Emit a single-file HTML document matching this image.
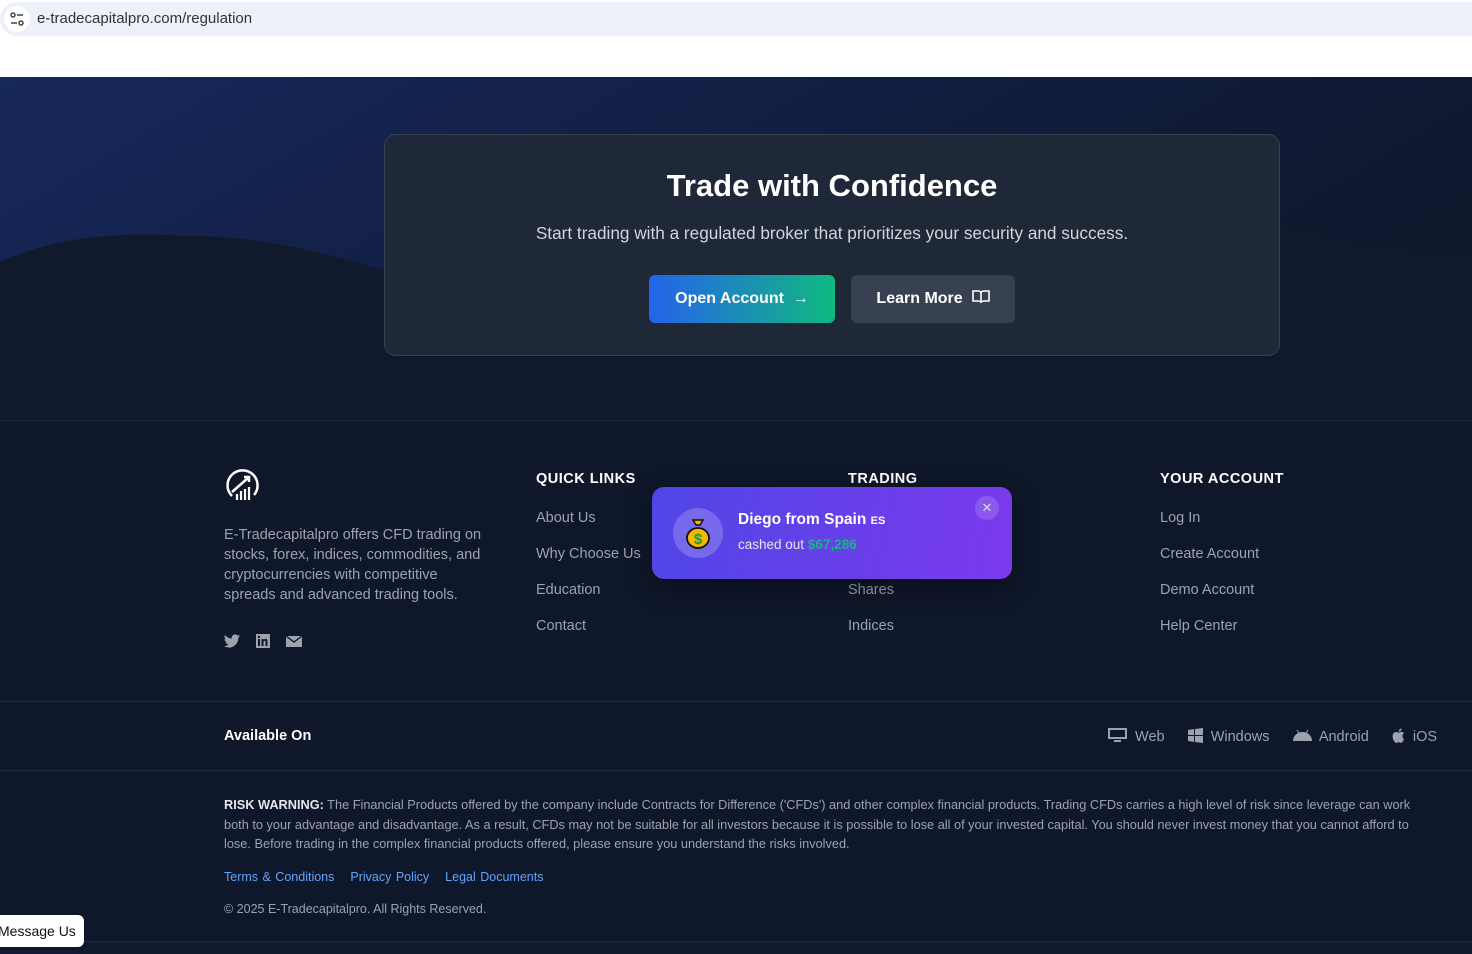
<!DOCTYPE html>
<html><head><meta charset="utf-8"><style>
*{margin:0;padding:0;box-sizing:border-box}
body{width:1472px;height:954px;overflow:hidden;font-family:"Liberation Sans",sans-serif;background:#0f172a;position:relative}
.bar{position:absolute;left:0;top:0;width:1472px;height:77px;background:#fff}
.url{position:absolute;left:0;top:2px;width:1472px;height:34px;background:#edf2fa;border-radius:17px 0 0 17px}
.url span{position:absolute;left:37px;top:8px;font-size:15px;color:#333}
.ic{position:absolute;left:4px;top:4px;width:26px;height:26px;border-radius:13px;background:#fff}
.hero{position:absolute;left:0;top:77px;width:1472px;height:344px;overflow:hidden;border-bottom:1px solid #1e293b}
.card{position:absolute;left:384px;top:134px;width:896px;height:222px;background:rgba(31,41,55,.92);border:1px solid #374151;border-radius:12px;text-align:center}
.card h1{font-size:31px;color:#fff;margin-top:33px;font-weight:bold}
.card p{font-size:17.2px;color:#d1d5db;margin-top:19px}
.btn{position:absolute;top:140px;height:48px;border-radius:6px;color:#fff;font-weight:bold;font-size:16px;line-height:48px}
.b1{left:264px;width:186px;background:linear-gradient(90deg,#2563eb,#10b981)}
.b2{left:466px;width:164px;background:#374151}
.foot{position:absolute;left:0;top:421px;width:1472px;height:533px;background:#0f172a}
.col h4{position:absolute;top:50px;color:#fff;font-size:14.5px;letter-spacing:.5px}
.lnk{position:absolute;color:#9ca3af;font-size:14.5px}
.desc{position:absolute;left:224px;top:104px;width:266px;color:#9ca3af;font-size:14.5px;line-height:20px}
.sep{position:absolute;left:0;width:1472px;height:1px;background:#1e293b}
.pop{position:absolute;left:652px;top:487px;width:360px;height:92px;border-radius:12px;background:linear-gradient(100deg,#4f46e5,#7c3aed);box-shadow:0 8px 24px rgba(0,0,0,.4)}
.risk{position:absolute;left:224px;top:795px;width:1196px;font-size:12.75px;line-height:19.6px;color:#9ca3af}
.msg{position:absolute;left:-2px;top:915px;width:86px;height:32px;background:#fff;border-radius:0 6px 6px 0;font-size:14px;line-height:32px;color:#111;padding-left:0;box-shadow:0 1px 4px rgba(0,0,0,.3)}
</style></head><body>
<div class="bar"><div class="url"><div class="ic"><svg width="26" height="26" viewBox="0 0 26 26" fill="none" stroke="#444" stroke-width="1.5"><circle cx="9" cy="9" r="2"/><path d="M13 9h6M7 17h6"/><circle cx="17" cy="17" r="2"/></svg></div><span>e-tradecapitalpro.com/regulation</span></div></div>
<div class="hero">
<svg width="1472" height="344" style="position:absolute;left:0;top:0">
<defs><linearGradient id="g" x1="0" y1="0" x2="1" y2="0.4"><stop offset="0" stop-color="#16275a"/><stop offset="1" stop-color="#0f172c"/></linearGradient></defs>
<rect width="1472" height="344" fill="url(#g)"/>
<path d="M0 185 C80 150 150 158 220 160 C330 165 430 220 560 225 C700 230 900 185 1050 150 C1150 125 1230 130 1300 150 C1370 170 1420 175 1472 172 L1472 344 L0 344Z" fill="#111a2c"/>
</svg>
</div>
<div class="card"><h1>Trade with Confidence</h1><p>Start trading with a regulated broker that prioritizes your security and success.</p>
<div class="btn b1">Open Account &nbsp;→</div><div class="btn b2">Learn More &nbsp;<svg width="18" height="16" viewBox="0 0 18 16" fill="none" stroke="#fff" stroke-width="1.6" style="vertical-align:-2px"><path d="M1 2h5c2 0 3 1 3 2v10c0-1-1-2-3-2H1zM17 2h-5c-2 0-3 1-3 2v10c0-1 1-2 3-2h5z"/></svg></div></div>
<div class="foot">
<svg style="position:absolute;left:224px;top:47px" width="36" height="36" viewBox="0 0 36 36" fill="none" stroke="#fff" stroke-width="2.5"><path d="M8 28A15 15 0 1 1 30 27"/><path d="M8 24l16-14M20 9h5v5"/><path d="M13 32v-6M17 32v-9M21 32v-11M25 32v-13" stroke-width="2.2"/></svg>
<div class="desc">E-Tradecapitalpro offers CFD trading on stocks, forex, indices, commodities, and cryptocurrencies with competitive spreads and advanced trading tools.</div>
<svg style="position:absolute;left:224px;top:212px" width="80" height="16" viewBox="0 0 80 16" fill="#9ca3af"><path d="M16 3c-.6.3-1.2.4-1.9.5.7-.4 1.2-1 1.4-1.8-.6.4-1.3.6-2.1.8A3.3 3.3 0 0 0 7.8 5.5 9.3 9.3 0 0 1 1 2a3.3 3.3 0 0 0 1 4.4c-.5 0-1-.2-1.5-.4 0 1.6 1.1 2.9 2.6 3.2-.5.1-1 .2-1.5.1.4 1.3 1.6 2.3 3.1 2.3A6.6 6.6 0 0 1 0 13a9.3 9.3 0 0 0 14.3-8.3C15 4.3 15.6 3.7 16 3z"/><rect x="32" y="1" width="14" height="14"/><path d="M34 6h2v7h-2zM37.5 6h2v1c.5-.8 1.3-1.1 2-1.1 1.5 0 2 1 2 2.6V13h-2V9c0-.8-.3-1.2-.9-1.2s-1.1.4-1.1 1.2v4h-2z" fill="#0f172a"/><rect x="34" y="3" width="2" height="2" fill="#0f172a"/><path d="M62 3h16v11H62z"/><path d="M62 3l8 6 8-6" stroke="#0f172a" stroke-width="1.4" fill="none"/></svg>
<div class="col"><h4 style="left:536px">QUICK LINKS</h4><h4 style="left:848px">TRADING</h4><h4 style="left:1160px">YOUR ACCOUNT</h4></div>
<div class="lnk" style="left:536px;top:89px">About Us</div><div class="lnk" style="left:536px;top:125px">Why Choose Us</div><div class="lnk" style="left:536px;top:161px">Education</div><div class="lnk" style="left:536px;top:197px">Contact</div>
<div class="lnk" style="left:848px;top:161px">Shares</div><div class="lnk" style="left:848px;top:197px">Indices</div>
<div class="lnk" style="left:1160px;top:89px">Log In</div><div class="lnk" style="left:1160px;top:125px">Create Account</div><div class="lnk" style="left:1160px;top:161px">Demo Account</div><div class="lnk" style="left:1160px;top:197px">Help Center</div>
</div>
<div class="sep" style="top:701px"></div>
<div style="position:absolute;left:224px;top:728px;color:#fff;font-weight:bold;font-size:14.5px">Available On</div>
<div style="position:absolute;left:1108px;top:727px;color:#9ca3af;font-size:14.5px;white-space:nowrap">
<svg width="19" height="16" viewBox="0 0 19 16" fill="#9ca3af" style="vertical-align:-2px"><path d="M0 1h19v11H0z M2 3v7h15V3z" fill-rule="evenodd"/><rect x="6" y="13" width="7" height="2"/></svg>&nbsp; Web
<span style="margin-left:19px"><svg width="15" height="15" viewBox="0 0 15 15" fill="#9ca3af" style="vertical-align:-2px"><path d="M0 2l6-1v6H0zM7 1l8-1v7H7zM0 8h6v6l-6-1zM7 8h8v7l-8-1z"/></svg>&nbsp; Windows</span>
<span style="margin-left:19px"><svg width="19" height="12" viewBox="0 0 19 12" fill="#9ca3af" style="vertical-align:0"><path d="M0 12C0 7 4 3 9.5 3S19 7 19 12z"/><path d="M4 1l2 3M15 1l-2 3" stroke="#9ca3af" stroke-width="1"/></svg>&nbsp; Android</span>
<span style="margin-left:19px"><svg width="13" height="15" viewBox="0 0 13 15" fill="#9ca3af" style="vertical-align:-2px"><path d="M10.5 8c0-2 1.5-2.6 1.6-2.7-.9-1.3-2.3-1.4-2.7-1.4-1.1-.1-2.2.7-2.8.7s-1.5-.7-2.4-.6C2.9 4 1.8 4.7 1.2 5.800c-1.3 2.2-.3 5.5.9 7.3.6.9 1.3 1.8 2.2 1.8s1.2-.6 2.3-.6 1.4.6 2.3.6 1.5-.9 2.1-1.8c.7-1 .9-1.9 1-2-.1 0-1.5-.6-1.5-3.1zM8.8 2.6c.5-.6.8-1.4.7-2.2-.7 0-1.5.5-2 1.1-.4.5-.8 1.3-.7 2.1.8.1 1.5-.4 2-1z"/></svg>&nbsp; iOS</span></div>
<div class="sep" style="top:770px"></div>
<div class="risk"><b style="color:#e5e7eb">RISK WARNING:</b> The Financial Products offered by the company include Contracts for Difference ('CFDs') and other complex financial products. Trading CFDs carries a high level of risk since leverage can work both to your advantage and disadvantage. As a result, CFDs may not be suitable for all investors because it is possible to lose all of your invested capital. You should never invest money that you cannot afford to lose. Before trading in the complex financial products offered, please ensure you understand the risks involved.</div>
<div style="position:absolute;left:224px;top:870px;font-size:12.5px;color:#60a5fa;word-spacing:1px">Terms &amp; Conditions<span style="margin-left:16px">Privacy Policy</span><span style="margin-left:16px">Legal Documents</span></div>
<div style="position:absolute;left:224px;top:902px;font-size:12.5px;color:#9ca3af">© 2025 E-Tradecapitalpro. All Rights Reserved.</div>
<div class="sep" style="top:941px"></div>
<div style="position:absolute;left:0;top:942px;width:1472px;height:12px;background:#111a2e"></div>
<div class="pop">
<div style="position:absolute;left:21px;top:21px;width:50px;height:50px;border-radius:25px;background:rgba(255,255,255,.2)"></div>
<svg style="position:absolute;left:33px;top:31px" width="26" height="32" viewBox="0 0 26 32"><path d="M8 2h10l-3 5h-4z" fill="#f5b800" stroke="#111" stroke-width="1.5"/><ellipse cx="13" cy="20" rx="11" ry="10" fill="#f5b800" stroke="#111" stroke-width="1.8"/><text x="13" y="26" font-size="15" font-weight="bold" fill="#1a9b3c" text-anchor="middle" font-family="Liberation Sans">$</text></svg>
<div style="position:absolute;left:86px;top:24px;color:#fff;font-weight:bold;font-size:15.5px">Diego from Spain <span style="font-size:11px">ES</span></div>
<div style="position:absolute;left:86px;top:50px;color:#e5e7eb;font-size:13.5px">cashed out <b style="color:#10b981">$67,286</b></div>
<div style="position:absolute;left:323px;top:9px;width:24px;height:24px;border-radius:12px;background:rgba(255,255,255,.15);color:#ddd;text-align:center;line-height:24px;font-size:13px">✕</div>
</div>
<div class="msg">Message Us</div>
</body></html>
